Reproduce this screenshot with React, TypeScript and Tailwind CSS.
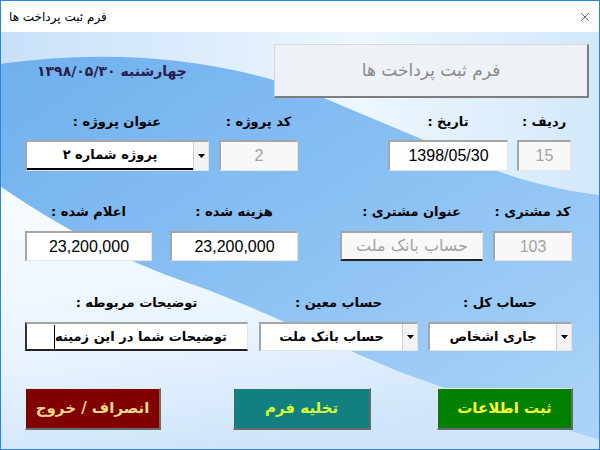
import { X } from "lucide-react";
import type { ReactNode } from "react";

const sunken =
  "border-t-2 border-l-2 border-b border-r border-t-[#a5a5a5] border-l-[#a5a5a5] border-b-[#e4e4e4] border-r-[#e4e4e4]";

function Field({ label, className, children }: { label: string; className: string; children: ReactNode }) {
  return (
    <div className={`flex flex-col items-center ${className}`}>
      <div className="h-[18px] leading-[18px] text-[13px] font-bold text-black whitespace-nowrap">{label}</div>
      {children}
    </div>
  );
}

function Arrow() {
  return (
    <div className="w-[15px] h-full flex items-center justify-center bg-[#f3f3f3] border-l border-l-[#d0d0d0]">
      <svg width="7" height="4" viewBox="0 0 7 4">
        <path d="M0 0 L7 0 L3.5 4 Z" fill="#000" />
      </svg>
    </div>
  );
}

function Background() {
  return (
    <svg className="absolute inset-0 w-full h-full" viewBox="1 32 598 417" preserveAspectRatio="none">
      <defs>
        <linearGradient id="top" x1="0" y1="0" x2="1" y2="0">
          <stop offset="0" stopColor="#c7e1f9" />
          <stop offset="0.6" stopColor="#eef6fe" />
          <stop offset="1" stopColor="#d3e8fb" />
        </linearGradient>
        <linearGradient id="wave" x1="0" y1="0" x2="1" y2="1">
          <stop offset="0" stopColor="#6fb0ee" />
          <stop offset="0.5" stopColor="#8bc1f3" />
          <stop offset="1" stopColor="#acd4f8" />
        </linearGradient>
        <linearGradient id="low" x1="0" y1="0" x2="0.3" y2="1">
          <stop offset="0" stopColor="#f8fcff" />
          <stop offset="0.6" stopColor="#eaf4fe" />
          <stop offset="1" stopColor="#cfe5fb" />
        </linearGradient>
      </defs>
      <rect x="0" y="30" width="600" height="420" fill="url(#top)" />
      <path d="M0 186 C50 220 110 255 180 280 C240 300 300 330 400 372 C450 390 520 415 600 440 L600 450 L0 450 Z" fill="url(#low)" />
      <path
        d="M0 64 C100 50 200 55 300 88 L500 172 C540 186 575 192 600 195 L600 440 C520 415 450 390 400 372 C300 330 240 300 180 280 C110 255 50 220 0 186 Z"
        fill="url(#wave)"
      />
    </svg>
  );
}

export default function App() {
  return (
    <div className="w-[600px] h-[450px] flex flex-col border border-[#2a86d6] bg-white overflow-hidden font-['DejaVu_Sans',sans-serif]">
      <div className="h-[31px] shrink-0 flex items-center justify-between pl-[8px] pr-[7px] bg-white">
        <span className="text-[12px] text-black" dir="rtl">فرم ثبت پرداخت ها</span>
        <X size={14} strokeWidth={1.2} className="text-[#222]" />
      </div>

      <div className="relative flex-1">
        <Background />
        <div className="relative flex flex-col" dir="rtl">
          <div className="mt-[12px] h-[54px] flex items-center justify-between pr-[10px] pl-[36px]">
            <div className="w-[315px] h-[54px] flex items-center justify-center bg-[#eef1f5] border-t border-l border-t-[#d8d8d8] border-l-[#d8d8d8] border-b-2 border-r-2 border-b-[#7d7d7d] border-r-[#7d7d7d] text-[17px] text-[#8a8a8a]">
              فرم ثبت پرداخت ها
            </div>
            <div className="text-[14px] font-bold text-[#2c1d4c]">چهارشنبه ۱۳۹۸/۰۵/۳۰</div>
          </div>

          <div className="mt-[15px] flex pr-[28px]">
            <Field label="ردیف :" className="w-[54px]">
              <div className={`mt-[9px] w-full h-[31px] flex items-center justify-center bg-[#f8f8f8] ${sunken} font-['Liberation_Sans'] text-[16px] text-[#a3a3a3]`}>15</div>
            </Field>
            <Field label="تاریخ :" className="w-[120px] mr-[9px]">
              <div className={`mt-[9px] w-full h-[31px] flex items-center justify-center bg-white ${sunken} font-['Liberation_Sans'] text-[16px] text-black`}>1398/05/30</div>
            </Field>
            <Field label="کد پروژه :" className="w-[79px] mr-[90px]">
              <div className={`mt-[9px] w-full h-[31px] flex items-center justify-center bg-[#f8f8f8] ${sunken} font-['Liberation_Sans'] text-[16px] text-[#a3a3a3]`}>2</div>
            </Field>
            <Field label="عنوان پروژه :" className="w-[184px] mr-[10px]">
              <div className={`mt-[9px] w-full h-[31px] flex bg-white ${sunken}`}>
                <Arrow />
                <div className="flex-1 flex items-center justify-center border-b-2 border-b-black text-[13px] font-bold text-black">پروژه شماره ۲</div>
              </div>
            </Field>
          </div>

          <div className="mt-[32px] flex pr-[27px]">
            <Field label="کد مشتری :" className="w-[79px]">
              <div className={`mt-[10px] w-full h-[30px] flex items-center justify-center bg-[#f8f8f8] ${sunken} font-['Liberation_Sans'] text-[16px] text-[#a3a3a3]`}>103</div>
            </Field>
            <Field label="عنوان مشتری :" className="w-[143px] mr-[10px]">
              <div className="mt-[10px] w-full h-[30px] flex items-center justify-center bg-[#f8f8f8] border-t-2 border-l-2 border-r border-t-[#a5a5a5] border-l-[#a5a5a5] border-r-[#e4e4e4] border-b-2 border-b-[#222] text-[16px] text-[#a3a3a3]">حساب بانک ملت</div>
            </Field>
            <Field label="هزینه شده :" className="w-[128px] mr-[42px]">
              <div className={`mt-[10px] w-full h-[30px] flex items-center justify-center bg-white ${sunken} font-['Liberation_Sans'] text-[16px] text-black`}>23,200,000</div>
            </Field>
            <Field label="اعلام شده :" className="w-[127px] mr-[18px]">
              <div className={`mt-[10px] w-full h-[30px] flex items-center justify-center bg-white ${sunken} font-['Liberation_Sans'] text-[16px] text-black`}>23,200,000</div>
            </Field>
          </div>

          <div className="mt-[33px] flex pr-[27px]">
            <Field label="حساب کل :" className="w-[144px]">
              <div className={`mt-[10px] w-full h-[29px] flex bg-white ${sunken}`}>
                <Arrow />
                <div className="flex-1 flex items-center justify-center text-[13px] font-bold text-black">جاری اشخاص</div>
              </div>
            </Field>
            <Field label="حساب معین :" className="w-[159px] mr-[10px]">
              <div className={`mt-[10px] w-full h-[29px] flex bg-white ${sunken}`}>
                <Arrow />
                <div className="flex-1 flex items-center justify-center text-[13px] font-bold text-black">حساب بانک ملت</div>
              </div>
            </Field>
            <Field label="توضیحات مربوطه :" className="w-[223px] mr-[11px]">
              <div className="mt-[10px] w-full h-[29px] flex items-center overflow-hidden bg-white border-t-2 border-r border-t-[#a5a5a5] border-r-[#e4e4e4] border-l-2 border-l-[#333] border-b-2 border-b-[#222] pr-[20px]">
                <span className="text-[13px] font-bold text-black whitespace-nowrap">توضیحات شما در این زمینه</span>
                <span className="w-px h-[24px] bg-black shrink-0" />
              </div>
            </Field>
          </div>

          <div className="mt-[37px] flex pr-[26px]">
            <div className="w-[136px] h-[42px] flex items-center justify-center bg-[#008000] border-t border-l border-t-[#e8e8e8] border-l-[#e8e8e8] border-b-2 border-r-2 border-b-[#6a6a6a] border-r-[#6a6a6a] text-[15px] font-bold text-[#ffff33]">ثبت اطلاعات</div>
            <div className="w-[138px] h-[42px] mr-[66px] flex items-center justify-center bg-[#137f80] border-t border-l border-t-[#e8e8e8] border-l-[#e8e8e8] border-b-2 border-r-2 border-b-[#6a6a6a] border-r-[#6a6a6a] text-[15px] font-bold text-[#d6ff33]">تخلیه فرم</div>
            <div className="w-[136px] h-[42px] mr-[72px] flex items-center justify-center bg-[#800000] border-t border-l border-t-[#e8e8e8] border-l-[#e8e8e8] border-b-2 border-r-2 border-b-[#6a6a6a] border-r-[#6a6a6a] text-[15px] font-bold text-[#f8d98a]">انصراف / خروج</div>
          </div>
        </div>
      </div>
    </div>
  );
}
